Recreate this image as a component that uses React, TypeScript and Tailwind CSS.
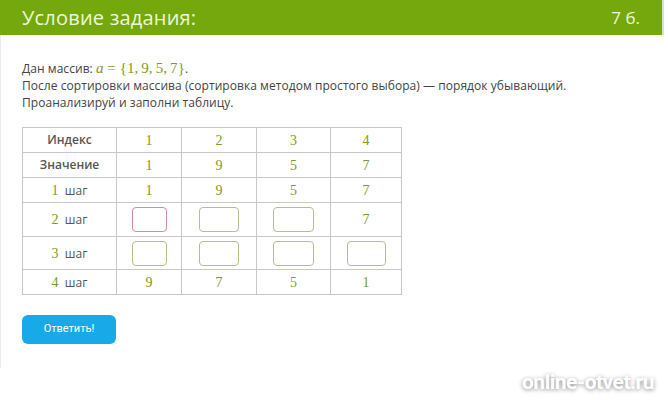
import React from "react";

const num = "font-['Liberation_Serif','DejaVu_Serif',serif] text-[14px] text-[#7f9a22]";
const cell = "border border-[#c8c8c8] text-center align-middle p-0";

function Box({ w, pink }: { w: number; pink?: boolean }) {
  return (
    <div
      className={`mx-auto h-[25px] rounded-[4px] border-[1.5px] bg-white ${pink ? "border-[#d488b8]" : "border-[#b9bd8c]"}`}
      style={{ width: w }}
    />
  );
}

export default function App() {
  const widths = [94, 65, 75, 74, 71];
  return (
    <div className="relative w-[668px] h-[400px] bg-white overflow-hidden font-['Open_Sans','Liberation_Sans',sans-serif]">
      <div className="w-[664px] border-r-2 border-[#dcdcdc]">
        <div className="h-[35px] bg-[#74a80d] flex items-center justify-between pl-[22px] pr-[22px]">
          <span className="text-[20px] text-[#eef7dc] leading-none tracking-[0.2px]">Условие задания:</span>
          <span className="text-[17px] text-[#eef7dc] leading-none">7 б.</span>
        </div>
      </div>
      <div className="w-[664px] h-[333px] border-l border-[#ececec] pl-[21px] pt-[25px]">
        <div className="text-[12px] leading-[17px] text-[#444] tracking-[0.05px]">
          <div>
            Дан массив:{" "}
            <span className="font-['Liberation_Serif','DejaVu_Serif',serif] text-[15px] text-[#7f9a22]">
              <i>a</i>&nbsp;=&nbsp;{"{"}1,&thinsp;9,&thinsp;5,&thinsp;7{"}"}
            </span>
            .
          </div>
          <div>После сортировки массива (сортировка методом простого выбора) — порядок убывающий.</div>
          <div>Проанализируй и заполни таблицу.</div>
        </div>
        <table className="mt-[16px] border-collapse text-[12px] text-[#555]">
          <colgroup>
            {widths.map((w, i) => (
              <col key={i} style={{ width: w }} />
            ))}
          </colgroup>
          <tbody>
            <tr className="h-[25px]">
              <td className={`${cell} font-semibold`}>Индекс</td>
              <td className={`${cell} ${num}`}>1</td>
              <td className={`${cell} ${num}`}>2</td>
              <td className={`${cell} ${num}`}>3</td>
              <td className={`${cell} ${num}`}>4</td>
            </tr>
            <tr className="h-[25px]">
              <td className={`${cell} font-semibold`}>Значение</td>
              <td className={`${cell} ${num}`}>1</td>
              <td className={`${cell} ${num}`}>9</td>
              <td className={`${cell} ${num}`}>5</td>
              <td className={`${cell} ${num}`}>7</td>
            </tr>
            <tr className="h-[25px]">
              <td className={cell}>
                <span className={num}>1</span>&nbsp; шаг
              </td>
              <td className={`${cell} ${num}`}>1</td>
              <td className={`${cell} ${num}`}>9</td>
              <td className={`${cell} ${num}`}>5</td>
              <td className={`${cell} ${num}`}>7</td>
            </tr>
            <tr className="h-[34px]">
              <td className={cell}>
                <span className={num}>2</span>&nbsp; шаг
              </td>
              <td className={cell}><Box w={35} pink /></td>
              <td className={cell}><Box w={40} /></td>
              <td className={cell}><Box w={41} /></td>
              <td className={`${cell} ${num}`}>7</td>
            </tr>
            <tr className="h-[33px]">
              <td className={cell}>
                <span className={num}>3</span>&nbsp; шаг
              </td>
              <td className={cell}><Box w={35} /></td>
              <td className={cell}><Box w={40} /></td>
              <td className={cell}><Box w={41} /></td>
              <td className={cell}><Box w={39} /></td>
            </tr>
            <tr className="h-[25px]">
              <td className={cell}>
                <span className={num}>4</span>&nbsp; шаг
              </td>
              <td className={`${cell} ${num}`}>9</td>
              <td className={`${cell} ${num}`}>7</td>
              <td className={`${cell} ${num}`}>5</td>
              <td className={`${cell} ${num}`}>1</td>
            </tr>
          </tbody>
        </table>
        <button className="mt-[20px] w-[94px] h-[29px] rounded-[6px] bg-[#18a9e9] text-white text-[11px] font-['Roboto',sans-serif]">
          Ответить!
        </button>
      </div>
      <div className="absolute left-[522px] top-[372px] text-[21px] font-bold text-white tracking-[-0.5px] font-['Liberation_Sans_Narrow','Roboto',sans-serif] [text-shadow:0_1px_4px_rgba(0,0,0,0.45)] leading-none">
        online-otvet.ru
      </div>
    </div>
  );
}
